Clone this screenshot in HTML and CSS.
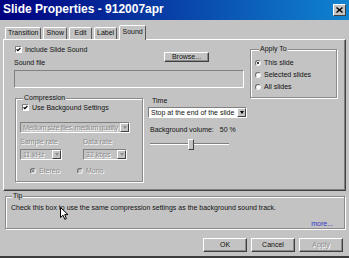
FILE: index.html
```html
<!doctype html>
<html>
<head>
<title>Slide Properties</title>
<link rel="stylesheet" href="styles.css">
</head>
<body>
<div class="window">
  <div class="titlebar">
    <span class="title">Slide Properties - 912007apr</span>
    <span class="close"><svg width="7" height="6" viewBox="0 0 7 6"><path d="M0.5 0.5 L6.5 5.5 M6.5 0.5 L0.5 5.5" stroke="#000" stroke-width="1.4"/></svg></span>
  </div>
  <div class="tabs">
    <span class="tab">Transition</span>
    <span class="tab">Show</span>
    <span class="tab">Edit</span>
    <span class="tab">Label</span>
    <span class="tab active">Sound</span>
  </div>
  <div class="panel">
    <div class="top">
      <div class="source">
        <div class="check"><span class="box"><svg width="5" height="5" viewBox="0 0 5 5"><polyline points="0.6,2.2 1.9,3.6 4.4,1" fill="none" stroke="#000" stroke-width="1.3"/></svg></span>Include Slide Sound</div>
        <div class="file-row"><span class="file-label">Sound file</span><span class="button browse">Browse...</span></div>
        <div class="field"></div>
      </div>
      <div class="group apply">
        <span class="legend">Apply To</span>
        <div class="radio first"><span class="dot on"></span>This slide</div>
        <div class="radio"><span class="dot"></span>Selected slides</div>
        <div class="radio"><span class="dot"></span>All slides</div>
      </div>
    </div>
    <div class="bottom">
      <div class="group compression">
        <span class="legend">Compression</span>
        <div class="check inner"><span class="box"><svg width="5" height="5" viewBox="0 0 5 5"><polyline points="0.6,2.2 1.9,3.6 4.4,1" fill="none" stroke="#000" stroke-width="1.3"/></svg></span>Use Backgound Settings</div>
        <div class="select disabled wide"><span class="value">Medium size files, medium quality</span><span class="arrow"></span></div>
        <div class="rates">
          <span class="muted">Sample rate</span>
          <span class="muted">Data rate</span>
          <div class="select disabled khz"><span class="value">11 kHz</span><span class="arrow"></span></div>
          <div class="select disabled kbps"><span class="value">32 kbps</span><span class="arrow"></span></div>
        </div>
        <div class="channels">
          <div class="radio muted"><span class="dot on"></span>Stereo</div>
          <div class="radio muted"><span class="dot"></span>Mono</div>
        </div>
      </div>
      <div class="time">
        <span class="time-label">Time</span>
        <div class="select"><span class="value">Stop at the end of the slide</span><span class="arrow"></span></div>
        <div class="volume"><span>Background volume:</span><span>50 %</span></div>
        <div class="slider"><span class="thumb"></span></div>
      </div>
    </div>
  </div>
  <div class="group tip">
    <span class="legend">Tip</span>
    <p class="tip-text">Check this box to use the same compression settings as the background sound track.</p>
    <span class="more">more...</span>
  </div>
  <div class="buttons">
    <span class="button">OK</span>
    <span class="button">Cancel</span>
    <span class="button disabled">Apply</span>
  </div>
  <svg class="cursor" width="9" height="13" viewBox="0 0 9 13"><path d="M0.5 0.5 L0.5 10.5 L3 8.2 L4.8 12.3 L6.4 11.6 L4.7 7.6 L8 7.6 Z" fill="#fff" stroke="#000" stroke-width="1"/></svg>
</div>
</body>
</html>
```

FILE: styles.css
```css
* { box-sizing: border-box; }
html, body {
  margin: 0;
  padding: 0;
}
body {
  width: 349px;
  height: 258px;
  overflow: hidden;
  font-family: "Liberation Sans", Arial, sans-serif;
  font-size: 7px;
  line-height: 8px;
  color: #111;
  background: #c3c3c3;
}
.window {
  position: relative;
  display: flex;
  flex-direction: column;
  width: 349px;
  height: 258px;
  background: #c3c3c3;
  border-bottom: 2px solid #3c3c3c;
}

/* title bar */
.titlebar {
  display: flex;
  align-items: center;
  justify-content: space-between;
  height: 20px;
  padding: 0 3px 2px 3px;
  background: linear-gradient(to right, #000080 0%, #1084d0 100%);
  color: #fff;
}
.title {
  font-size: 12px;
  line-height: 14px;
  font-weight: bold;
}
.close {
  display: flex;
  align-items: center;
  justify-content: center;
  width: 13px;
  height: 12px;
  margin-top: 2px;
  background: #c3c3c3;
  border: 1px solid;
  border-color: #fff #404040 #404040 #fff;
}

/* tabs */
.tabs {
  display: flex;
  align-items: flex-end;
  gap: 2px;
  height: 19px;
  padding: 5px 0 0 5px;
}
.tab {
  height: 12px;
  min-width: 23px;
  padding: 0 2px;
  text-align: center;
  line-height: 10px;
  border: 1px solid;
  border-bottom: none;
  border-color: #fff #5a5a5a transparent #fff;
  border-radius: 2px 2px 0 0;
}
.tab.active {
  position: relative;
  z-index: 1;
  align-self: flex-start;
  height: 15px;
  min-width: 27px;
  margin: 0 -2px 0 0;
  line-height: 11px;
  background: #c3c3c3;
}

/* panel */
.panel {
  height: 152px;
  margin: 0 3px;
  border: 1px solid;
  border-color: #fff #404040 #404040 #fff;
  box-shadow: inset -1px -1px #808080;
}
.top {
  display: flex;
  height: 58px;
  padding: 6px 0 0 10px;
}
.source {
  display: flex;
  flex-direction: column;
  width: 230px;
}
.check {
  display: flex;
  align-items: center;
  gap: 3px;
  height: 7px;
  margin-left: 1px;
}
.box {
  display: flex;
  align-items: center;
  justify-content: center;
  width: 7px;
  height: 7px;
  background: #fff;
  border: 1px solid;
  border-color: #808080 #fff #fff #808080;
}
.file-row {
  display: flex;
  height: 17px;
  margin-top: -1px;
}
.file-label { padding-top: 7px; }
.button {
  display: flex;
  align-items: center;
  justify-content: center;
  background: #c3c3c3;
  border: 1px solid;
  border-color: #fff #404040 #404040 #fff;
  box-shadow: inset -1px -1px #8a8a8a;
}
.browse {
  width: 45px;
  height: 10px;
  margin: 0 35px 0 auto;
}
.field {
  height: 18px;
  margin-top: 1px;
  border: 1px solid;
  border-color: #808080 #fff #fff #808080;
}

/* group boxes */
.group {
  display: flex;
  flex-direction: column;
  border: 1px solid #8a8a8a;
  box-shadow: inset 1px 1px #fff, 1px 1px #fff;
}
.legend {
  align-self: flex-start;
  height: 8px;
  margin: -5px 0 0 4px;
  padding: 0 1px;
  background: #c3c3c3;
}
.apply {
  width: 87px;
  height: 49px;
  margin: 3px 0 0 6px;
  padding-left: 4px;
}
.radio {
  display: flex;
  align-items: center;
  gap: 3px;
  height: 12px;
}
.radio.first { margin-top: 4px; }
.dot {
  display: flex;
  align-items: center;
  justify-content: center;
  width: 6px;
  height: 6px;
  border-radius: 50%;
  background: #fff;
  border: 1px solid;
  border-color: #6a6a6a #eee #eee #6a6a6a;
}
.dot.on::after {
  content: "";
  width: 2px;
  height: 2px;
  border-radius: 50%;
  background: #000;
}

.bottom {
  display: flex;
  gap: 5px;
  padding-left: 11px;
}
.compression {
  width: 128px;
  height: 84px;
  padding-left: 4px;
}
.compression .legend { margin-left: 3px; }
.check.inner {
  height: 9px;
  margin: 1px 0 0 2px;
}

.select {
  display: flex;
  height: 11px;
  background: #fff;
  border: 1px solid;
  border-color: #808080 #fff #fff #808080;
}
.select .value {
  flex: 1;
  padding-left: 2px;
  line-height: 9px;
  white-space: nowrap;
  overflow: hidden;
}
.select .arrow {
  display: flex;
  align-items: center;
  justify-content: center;
  width: 9px;
  background: #c3c3c3;
  border: 1px solid;
  border-color: #fff #404040 #404040 #fff;
}
.select .arrow::after {
  content: "";
  border-top: 3px solid #000;
  border-left: 2.5px solid transparent;
  border-right: 2.5px solid transparent;
}
.select.disabled {
  background: #c3c3c3;
  color: #8c8c8c;
  text-shadow: 1px 1px #fff;
}
.select.disabled .arrow::after { border-top-color: #8c8c8c; }
.wide {
  width: 110px;
  margin-top: 10px;
}
.wide .value { letter-spacing: -0.3px; }
.rates {
  display: grid;
  grid-template-columns: 63px 1fr;
  grid-template-rows: 8px 11px;
  row-gap: 3px;
  margin-top: 5px;
}
.khz { width: 42px; }
.kbps { width: 44px; }
.muted {
  color: #8c8c8c;
  text-shadow: 1px 1px #fff;
}
.channels {
  display: grid;
  grid-template-columns: 47px auto;
  margin-top: 5px;
  padding-left: 10px;
}
.channels .radio { height: 11px; }
.channels .dot { background: #c3c3c3; }
.channels .dot.on::after { background: #7a7a7a; }

.time {
  display: flex;
  flex-direction: column;
  width: 99px;
}
.time-label { margin: -1px 0 0 4px; }
.time .select { margin-top: 2px; }
.volume {
  display: flex;
  gap: 6px;
  margin: 8px 0 0 2px;
}
.slider {
  display: flex;
  width: 79px;
  height: 11px;
  margin: 5px 0 0 2px;
  background: linear-gradient(to bottom, transparent 4px, #808080 4px, #808080 5px, #fff 5px, #fff 6px, transparent 6px);
}
.thumb {
  width: 6px;
  height: 11px;
  margin-left: 38px;
  background: #c3c3c3;
  border: 1px solid;
  border-color: #fff #404040 #404040 #fff;
}

/* tip */
.tip {
  width: 340px;
  height: 33px;
  margin: 5px 0 0 5px;
}
.tip .legend { margin-left: 6px; }
.tip-text {
  margin: 4px 0 0 5px;
}
.more {
  align-self: flex-end;
  margin: auto 11px 0 0;
  color: #3434c4;
}

/* buttons */
.buttons {
  display: flex;
  justify-content: flex-end;
  gap: 4px;
  margin-top: 9px;
  padding-right: 6px;
}
.buttons .button {
  width: 44px;
  height: 14px;
}
.button.disabled {
  color: #8c8c8c;
  text-shadow: 1px 1px #fff;
}

.cursor {
  position: absolute;
  left: 60px;
  top: 207px;
}
```
